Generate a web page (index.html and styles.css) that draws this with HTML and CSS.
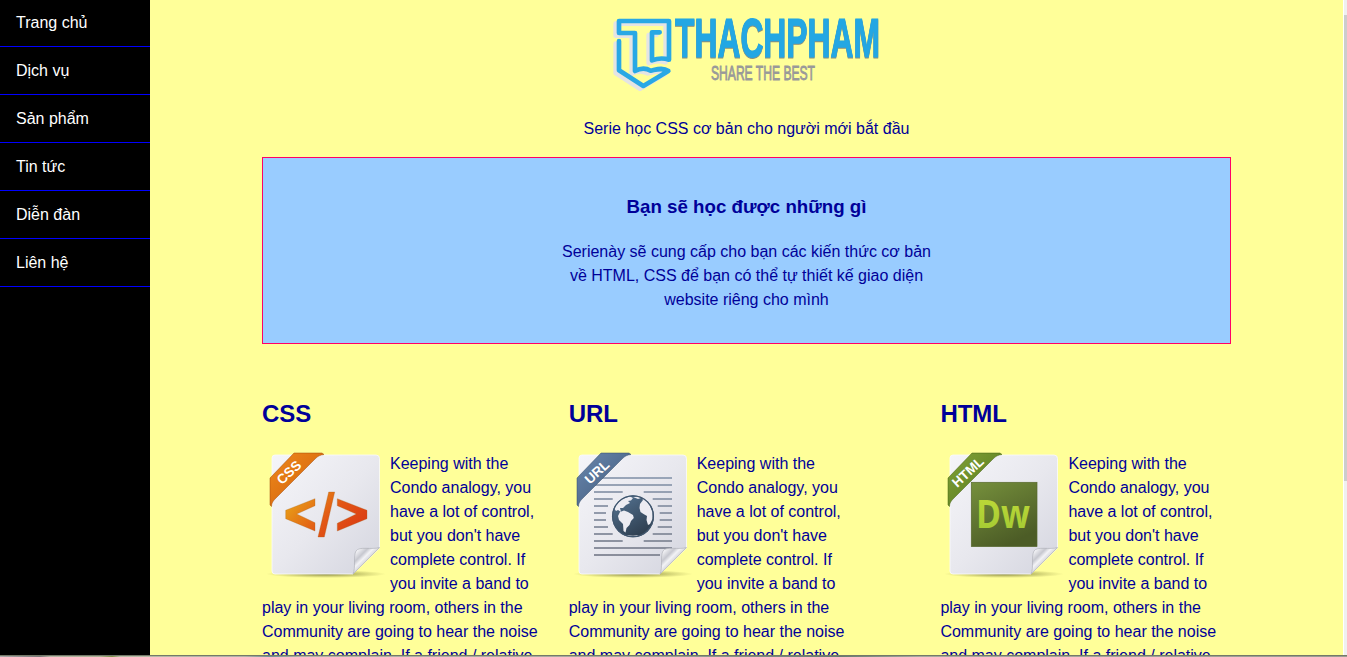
FILE: index.html
```html
<!DOCTYPE html>
<html lang="vi">
<head>
<meta charset="utf-8">
<title>Serie học CSS cơ bản</title>
<link rel="stylesheet" href="styles.css">
</head>
<body>
<svg class="defs" width="0" height="0" aria-hidden="true">
  <defs>
    <linearGradient id="paper" x1="0" y1="0" x2="1" y2="1"><stop offset="0" stop-color="#f5f5f9"/><stop offset=".5" stop-color="#e8e8ee"/><stop offset="1" stop-color="#d4d5df"/></linearGradient>
    <linearGradient id="curl" x1="0" y1="0" x2="1" y2="1"><stop offset="0" stop-color="#a9aab2"/><stop offset=".13" stop-color="#f4f4f7"/><stop offset=".3" stop-color="#c6c7cf"/><stop offset=".4" stop-color="#f3f3f6"/><stop offset=".6" stop-color="#bfc0c8"/></linearGradient>
    <radialGradient id="ground"><stop offset="0" stop-color="#55551c" stop-opacity=".75"/><stop offset="1" stop-color="#77772c" stop-opacity="0"/></radialGradient>
    <linearGradient id="orange" x1="0" y1="0" x2="1" y2="1"><stop offset="0" stop-color="#ee8a1c"/><stop offset="1" stop-color="#d05c08"/></linearGradient>
    <linearGradient id="blue" x1="0" y1="0" x2="1" y2="1"><stop offset="0" stop-color="#6a87ad"/><stop offset="1" stop-color="#3d5879"/></linearGradient>
    <linearGradient id="green" x1="0" y1="0" x2="1" y2="1"><stop offset="0" stop-color="#82a338"/><stop offset="1" stop-color="#52741a"/></linearGradient>
    <linearGradient id="code" gradientUnits="userSpaceOnUse" x1="35" y1="40" x2="85" y2="86"><stop offset="0" stop-color="#e8a018"/><stop offset=".6" stop-color="#e25615"/><stop offset="1" stop-color="#dc4014"/></linearGradient>
    <linearGradient id="lines" gradientUnits="userSpaceOnUse" x1="0" y1="26" x2="0" y2="103"><stop offset="0" stop-color="#99a5b8"/><stop offset="1" stop-color="#8a8e9b"/></linearGradient>
    <linearGradient id="sea" x1="0" y1="0" x2=".6" y2="1"><stop offset="0" stop-color="#567696"/><stop offset="1" stop-color="#2f3f50"/></linearGradient>
    <linearGradient id="tile" x1="0" y1="0" x2=".5" y2="1"><stop offset="0" stop-color="#76903c"/><stop offset="1" stop-color="#4c5c26"/></linearGradient>
    <linearGradient id="lime" x1="0" y1="0" x2="0" y2="1"><stop offset="0" stop-color="#c5dd3a"/><stop offset="1" stop-color="#9fc832"/></linearGradient>
    <g id="sheet">
      <ellipse cx="64" cy="122" rx="60" ry="4" fill="url(#ground)"/>
      <path d="M13 3H114Q117.500 3 117.500 6.500V96L91 122H13Q10 122 10 119V6Q10 3 13 3Z" fill="url(#paper)" stroke="#fafafc" stroke-width=".8"/>
    </g>
    <path id="corner" d="M91 122C94 116 91 104 94 99C97 94 110 98 117.500 95.500Z" fill="url(#curl)" stroke="#aaabb3" stroke-width=".6"/>
    <path id="ribbon" d="M8 26L32 1H60L62 2.500C58 3 56 4 53 7L14 46C11 49 9.500 51 9.500 54.500L8 53Z"/>
  </defs>
</svg>

<div class="page">
  <nav class="menu">
    <a>Trang chủ</a>
    <a>Dịch vụ</a>
    <a>Sản phẩm</a>
    <a>Tin tức</a>
    <a>Diễn đàn</a>
    <a>Liên hệ</a>
  </nav>

  <main class="content">
    <header class="header">
      <svg class="logo" width="275" height="85" viewBox="0 0 275 85">
        <g transform="scale(.33333) translate(-30 -15)" fill="none" stroke-width="14" stroke-linecap="round" stroke-linejoin="round">
          <path transform="translate(-10 8)" stroke="#e4e4e4" d="M57 108V196L130 243L205 198C188 186 168 194 152 197C136 188 120 190 105 198V84H57V48H207V164C188 158 172 160 156 166V82H179"/>
          <path stroke="#29a8e5" d="M57 108V196L130 243L205 198C188 186 168 194 152 197C136 188 120 190 105 198V84H57V48H207V164C188 158 172 160 156 166V82H179"/>
        </g>
        <text class="brand" x="65" y="47" textLength="205" lengthAdjust="spacingAndGlyphs">THACHPHAM</text>
        <text class="tagline" x="101" y="70" textLength="104" lengthAdjust="spacingAndGlyphs">SHARE THE BEST</text>
      </svg>
      <p class="subtitle">Serie học CSS cơ bản cho người mới bắt đầu</p>
    </header>

    <section class="intro">
      <h3>Bạn sẽ học được những gì</h3>
      <p>Serienày sẽ cung cấp cho bạn các kiến thức cơ bản về HTML, CSS để bạn có thể tự thiết kế giao diện website riêng cho mình</p>
    </section>

    <section class="columns">
      <article>
        <h2>CSS</h2>
        <svg class="icon" width="128" height="128" viewBox="0 0 128 128">
          <use href="#sheet"/><use href="#corner"/>
          <use href="#ribbon" fill="url(#orange)" stroke="#a34a08" stroke-width=".5"/>
          <text class="label" transform="translate(27 20.500) rotate(-43)" y="4.500">CSS</text>
          <path fill="url(#code)" stroke="#a8641c" stroke-width=".3" d="M23.700 58.300L53 46.700V53.700L34.700 62L53 70.700V79L23.700 66.700ZM66.700 40H72.700L62.300 85H56ZM75.300 46.700L105 58.300V66.700L75.300 79V71.300L94.300 62L75.300 53.700Z"/>
        </svg>
        <p>Keeping with the Condo analogy, you have a lot of control, but you don't have complete control. If you invite a band to play in your living room, others in the Community are going to hear the noise and may complain. If a friend / relative</p>
      </article>
      <article>
        <h2>URL</h2>
        <svg class="icon" width="128" height="128" viewBox="0 0 128 128">
          <use href="#sheet"/>
          <path stroke="url(#lines)" stroke-width="2" d="M25 26H103M25 33H103M25 40H53.700M74.700 40H103M25 47H43.700M83.700 47H103M25 54H39M88.700 54H103M25 61H37M90.700 61H103M25 68H37M90.700 68H103M25 75H39M88.700 75H103M25 82H43.700M83.700 82H103M25 89H53.700M74.700 89H103M25 96H103M25 103H91"/>
          <use href="#corner"/>
          <circle cx="64" cy="64.300" r="21" fill="url(#sea)"/>
          <g fill="#ececf2">
            <path d="M45.500 57C47 53 51 47.500 56 46L61 44.500L64 46L62 48.500L59 49L61 51L57 53L54 56L51 56L52 60L49 58L47 59Z"/>
            <path d="M51 60L55 58.500L59 60L64 63L64.800 66L62 69L60.500 73L57.500 76L56.500 80.500L54.500 79L54 72L50 68L49 64Z"/>
            <path d="M71 52L74 48L73 46L77 48L81 54L83.500 60L83.500 67L81 72L79 73L77.500 68L78 64L74.500 62L71.500 60L70.500 56Z"/>
            <path d="M64 45L69 44.500L72 46L69 47ZM56 83L64 83.800L70 83L67 84.500H60Z"/>
          </g>
          <circle cx="64" cy="64.300" r="20.400" fill="none" stroke="#40566e" stroke-width="1.200"/>
          <use href="#ribbon" fill="url(#blue)" stroke="#334b69" stroke-width=".5"/>
          <text class="label" transform="translate(28 20) rotate(-43)" y="4.500">URL</text>
        </svg>
        <p>Keeping with the Condo analogy, you have a lot of control, but you don't have complete control. If you invite a band to play in your living room, others in the Community are going to hear the noise and may complain. If a friend / relative</p>
      </article>
      <article>
        <h2>HTML</h2>
        <svg class="icon" width="128" height="128" viewBox="0 0 128 128">
          <use href="#sheet"/><use href="#corner"/>
          <rect x="31.300" y="30.300" width="65.700" height="64.300" fill="url(#tile)" stroke="#58692f" stroke-width=".7"/>
          <text class="dw" x="36" y="75.500" textLength="54" lengthAdjust="spacingAndGlyphs" fill="url(#lime)">Dw</text>
          <use href="#ribbon" fill="url(#green)" stroke="#42600f" stroke-width=".5"/>
          <text class="label" transform="translate(28 20) rotate(-43)" y="4.500">HTML</text>
        </svg>
        <p>Keeping with the Condo analogy, you have a lot of control, but you don't have complete control. If you invite a band to play in your living room, others in the Community are going to hear the noise and may complain. If a friend / relative</p>
      </article>
    </section>
  </main>

  <div class="scrollbar"><div class="thumb"></div></div>
</div>
<div class="edge"></div>
</body>
</html>
```

FILE: styles.css
```css
* { box-sizing: border-box; }

body {
  margin: 0;
  height: 657px;
  overflow: hidden;
  background: #ffff99;
  color: #000099;
  font: 16px/24px "Liberation Sans", Arial, sans-serif;
}

.defs { display: block; }

.page {
  display: flex;
  height: 655px;
  overflow: hidden;
}

.menu {
  flex: 0 0 150px;
  background: #000;
}

.menu a {
  display: block;
  height: 48px;
  padding: 12px 16px 11px;
  border-bottom: 1px solid #0000ff;
  color: #fff;
}

.menu a:first-child {
  height: 47px;
  padding-top: 11px;
}

.content {
  flex: 1;
  padding: 10px 112px 0;
}

.header { text-align: center; }

.logo {
  display: block;
  margin: 0 auto 0 348px;
  overflow: visible;
}

.brand {
  fill: #23a7e3;
  stroke: #23a7e3;
  stroke-width: 1.200px;
  font: bold 55px "Liberation Sans", Arial, sans-serif;
  filter: drop-shadow(0 1.500px 0.500px #8f8f78);
}

.tagline {
  fill: #999;
  font: 21px "Liberation Sans", Arial, sans-serif;
  stroke: #999;
  stroke-width: 0.900px;
}

.subtitle { margin: 22px 0 16px; }

.intro {
  height: 187px;
  padding-top: 37px;
  border: 1px solid #ff0066;
  background: #99ccff;
  text-align: center;
}

.intro h3 {
  margin: 0 0 21px;
  font-size: 18.720px;
}

.intro p {
  width: 375px;
  margin: 0 auto;
}

.columns {
  display: grid;
  grid-template-columns: 306.700px 371.700px 290px;
  padding-top: 58px;
}

.columns article { width: 280px; }

.columns h2 {
  margin: 0 0 26px;
  font-size: 24px;
}

.columns p { margin: 0; }

.icon { float: left; }

.label {
  fill: #fff;
  font: bold 13.500px "Liberation Sans", Arial, sans-serif;
  text-anchor: middle;
}

.dw { font: bold 40px "Open Sans", sans-serif; }

.scrollbar {
  flex: 0 0 4px;
  padding-top: 15px;
  border-left: 1px solid #fff;
  background: #f0f0f0;
}

.thumb {
  height: 466px;
  background: #cdcdcd;
}

.edge {
  height: 2px;
  border-top: 1px solid #747969;
  background: linear-gradient(90deg, #aaa 0, #777 40px, #b3b5a5 50px, #a8b093 100px, #789044 112px, #b5bca5 120px, #b0b2a8 245px, #6f9396 270px, #b0b2a6 300px, #a4a89d 640px, #647c70 840px, #a6aa9f 920px, #999d92 1347px);
}
```
